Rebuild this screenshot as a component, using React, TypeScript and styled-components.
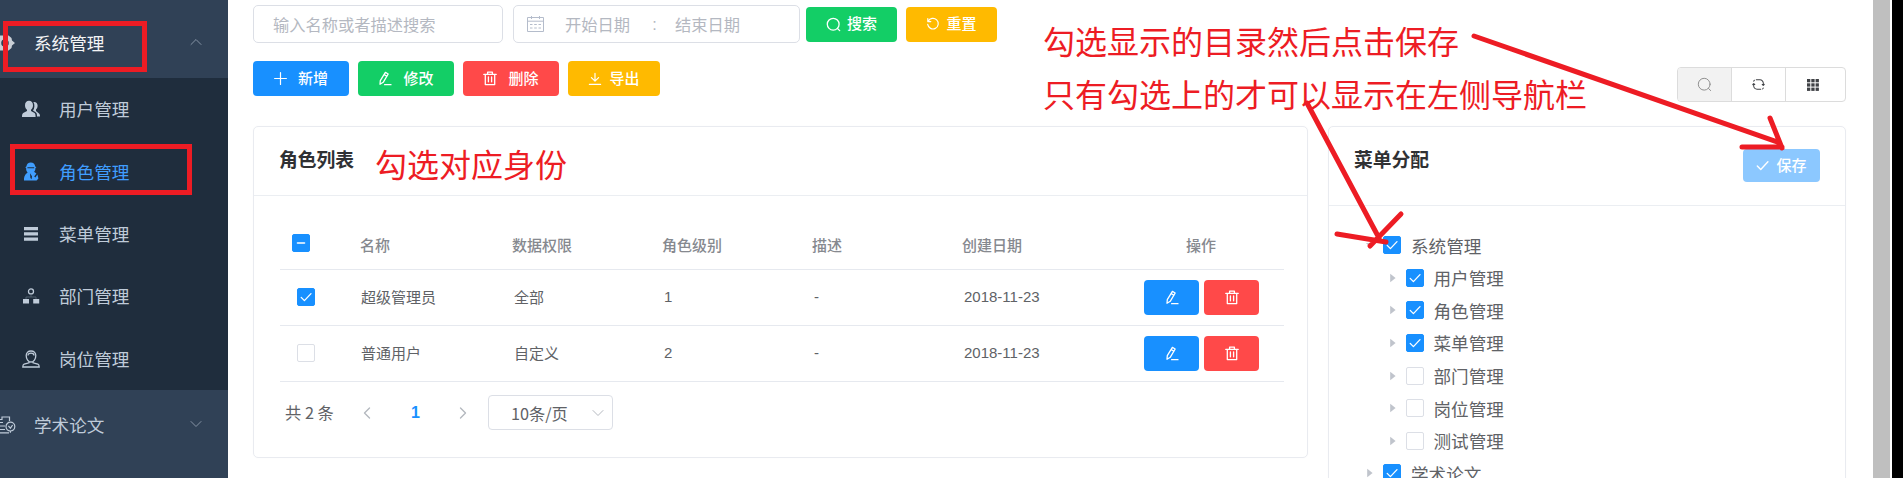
import React from "react";
import styled, { createGlobalStyle, css } from "styled-components";

const Global = createGlobalStyle`
  * { box-sizing: border-box; }
  html, body { margin: 0; padding: 0; overflow: hidden; background: #fff; }
  body { font-family: "Liberation Sans", "Noto Sans CJK SC", sans-serif; color: #606266; }
`;

const red = "#ed1c24";

const Page = styled.div`
  position: relative;
  display: flex;
  width: 1903px;
  height: 478px;
  overflow: hidden;
  background: #fff;
`;

const Sidebar = styled.nav`
  width: 228px;
  flex: none;
  background: #304156;
  padding-top: 8px;
  font-size: 17.6px;
  color: #bfcbd9;
`;

const MenuHead = styled.div<{ $active?: boolean }>`
  display: flex;
  align-items: center;
  height: 70px;
  padding-right: 26px;
  color: ${(p) => (p.$active ? "#f4f4f5" : "#bfcbd9")};
  > svg:first-child { margin-left: -3px; flex: none; }
  > svg:last-child { color: #8593a4; margin-top: -2px; }
  > span { margin: -2px 0 0 18px; flex: 1; }
`;

const SubMenu = styled.div`
  background: #1f2d3d;
  height: 312px;
`;

const SubItem = styled.div<{ $active?: boolean }>`
  display: flex;
  align-items: center;
  height: 62.4px;
  padding-left: 22px;
  gap: 19px;
  color: ${(p) => (p.$active ? "#409eff" : "#bfcbd9")};
  > span { margin-top: -1px; }
`;

const Main = styled.main`
  flex: 1;
  min-width: 0;
  display: flex;
  flex-direction: column;
  padding: 5px 27px 0 25px;
`;

const FilterRow = styled.div`
  display: flex;
  align-items: center;
  flex: none;
  height: 38px;
`;

const Field = styled.div<{ $w: number }>`
  display: flex;
  align-items: center;
  width: ${(p) => p.$w}px;
  height: 38px;
  border: 1px solid #dcdfe6;
  border-radius: 5px;
  font-size: 16.25px;
  color: #b4b8c1;
  margin-right: ${(p) => (p.$w === 250 ? 10 : 6)}px;
  white-space: nowrap;
`;

const Placeholder = styled.span`
  padding-left: 19px;
`;

const DateParts = styled.div`
  display: grid;
  grid-template-columns: 38px 65px 45px 66px;
  align-items: center;
  padding-left: 13px;
  > i { font-style: normal; text-align: center; padding-left: 4px; }
`;

const tones = {
  blue: "#1890ff",
  green: "#13ce66",
  red: "#ff4949",
  yellow: "#ffba00",
  pale: "#8cc8ff",
};

const Button = styled.button<{ $tone: keyof typeof tones; $w: number; $gap?: number; $h?: number }>`
  display: flex;
  align-items: center;
  justify-content: center;
  gap: ${(p) => p.$gap ?? 0}px;
  width: ${(p) => p.$w}px;
  height: ${(p) => p.$h ?? 35}px;
  padding: 0;
  border: 0;
  border-radius: 4px;
  background: ${(p) => tones[p.$tone]};
  color: #fff;
  font: 500 15px/20px "Noto Sans CJK SC", sans-serif;
  flex: none;
  > span { margin-top: -2px; }
`;

const ActionRow = styled.div`
  display: flex;
  flex: none;
  justify-content: space-between;
  align-items: flex-start;
  height: 65px;
  margin-top: 18px;
`;

const ButtonSet = styled.div<{ $gap: number }>`
  display: flex;
  gap: ${(p) => p.$gap}px;
`;

const ToolGroup = styled.div`
  display: flex;
  width: 169px;
  height: 35px;
  margin-top: 6px;
  border: 1px solid #dcdcdc;
  border-radius: 4px;
  overflow: hidden;
`;

const Tool = styled.div<{ $on?: boolean }>`
  display: flex;
  align-items: center;
  justify-content: center;
  width: 54px;
  border-right: 1px solid #dcdcdc;
  color: ${(p) => (p.$on ? "#909090" : "#404246")};
  background: ${(p) => (p.$on ? "#f2f2f2" : "#fff")};
  &:last-child { border: 0; }
`;

const Cards = styled.div`
  display: flex;
  gap: 20px;
  align-items: flex-start;
`;

const Card = styled.section<{ $w: number; $h: number }>`
  width: ${(p) => p.$w}px;
  height: ${(p) => p.$h}px;
  flex: none;
  border: 1px solid #e9ebf0;
  border-radius: 5px;
  box-shadow: 0 0 3px rgba(0, 0, 0, 0.02);
`;

const CardHead = styled.header<{ $h: number }>`
  display: flex;
  justify-content: space-between;
  align-items: flex-start;
  height: ${(p) => p.$h}px;
  padding: 22px 25px 0 25px;
  border-bottom: 1px solid #ebeef2;
`;

const Title = styled.h2`
  margin: 0;
  font-size: 18.8px;
  line-height: 24px;
  font-weight: 700;
  color: #303133;
`;

const Table = styled.div`
  margin: 26px 23px 0 26px;
`;

const TableRow = styled.div<{ $head?: boolean }>`
  display: grid;
  grid-template-columns: 81px 153px 150px 150px 150px 150px 1fr;
  align-items: center;
  height: ${(p) => (p.$head ? 48 : 56)}px;
  border-bottom: 1px solid #e6e9ef;
  font-size: 15px;
  color: #606266;
  > label { padding-left: 17px; margin-top: -2px; }
  > span { margin-top: -3px; }
  ${(p) =>
    p.$head &&
    css`
      grid-template-columns: 80px 152px 150px 150px 150px 150px 1fr;
      font-weight: 500;
      color: #86898f;
      > label { padding-left: 12px; margin-top: -5px; }
      > :last-child { padding-left: 74px; }
    `}
`;

const RowActions = styled.div`
  display: flex;
  gap: 5px;
  padding-left: 30px;
`;

const Box = styled.i<{ $on?: boolean }>`
  display: flex;
  align-items: center;
  justify-content: center;
  width: 18px;
  height: 18px;
  flex: none;
  border-radius: 2px;
  color: #fff;
  border: 1px solid ${(p) => (p.$on ? "#1890ff" : "#dcdfe6")};
  background: ${(p) => (p.$on ? "#1890ff" : "#fff")};
`;

const Pager = styled.div`
  display: flex;
  align-items: center;
  height: 35px;
  margin: 13px 0 0 31px;
  font: 16.25px/24px "Noto Sans CJK SC", sans-serif;
  color: #606266;
  > span:first-child { width: 76px; margin-top: -2px; }
  > svg { color: #b4b8bf; }
  > b { color: #1890ff; font: 700 16px "Liberation Sans", sans-serif; margin: 0 37px 0 38px; }
`;

const PageSize = styled.div`
  display: flex;
  align-items: center;
  justify-content: space-between;
  width: 125px;
  height: 35px;
  margin-left: 19px;
  padding: 0 8px 0 22px;
  border: 1px solid #dcdfe6;
  border-radius: 4px;
  > svg { color: #b4b8bf; }
`;

const Tree = styled.div`
  padding-top: 23px;
`;

const Node = styled.div<{ $level: number }>`
  display: flex;
  align-items: center;
  height: 32.57px;
  padding-left: ${(p) => 37 + p.$level * 22.5}px;
  font-size: 17.6px;
  color: #606266;
  > i { margin: 0 10px 0 9px; }
  > svg { flex: none; }
`;

const Gutter = styled.aside`
  width: 30px;
  flex: none;
  background: #000;
  border-left: 17px solid #bfbfbf;
  box-shadow: inset 2px 0 0 #fff;
`;

const Note = styled.div<{ $x: number; $y: number }>`
  position: absolute;
  left: ${(p) => p.$x}px;
  top: ${(p) => p.$y}px;
  font: 32px/40px "Noto Sans CJK SC", sans-serif;
  color: ${red};
  white-space: nowrap;
`;

const Frame = styled.div<{ $x: number; $y: number; $w: number }>`
  position: absolute;
  left: ${(p) => p.$x}px;
  top: ${(p) => p.$y}px;
  width: ${(p) => p.$w}px;
  height: 51px;
  border: 5px solid ${red};
`;

const Arrows = styled.svg`
  position: absolute;
  inset: 0;
  pointer-events: none;
`;

const stroke = { fill: "none", stroke: "currentColor", strokeLinecap: "round", strokeLinejoin: "round" } as const;

const Chevron = ({ d, s = 12, w = 1.2 }: { d: string; s?: number; w?: number }) => (
  <svg width={s} height={s} viewBox="0 0 12 12" {...stroke} strokeWidth={w}><path d={d} /></svg>
);
const Check = ({ s = 12, w = 1.3 }: { s?: number; w?: number }) => (
  <svg width={s} height={s} viewBox="0 0 12 12" {...stroke} strokeWidth={w}><path d="M1.2 6.4 4.4 9.6 11 2.6" /></svg>
);
const Pencil = () => (
  <svg width="14" height="15" viewBox="0 0 14 15" {...stroke} strokeWidth="1.3">
    <path d="M7.4 1.4 10.2 3 5.2 11.3 2 13.2 2.3 9.7ZM6.2 3.6 9 5.2M6.6 13.7H13" />
  </svg>
);
const Trash = () => (
  <svg width="14" height="15" viewBox="0 0 14 15" {...stroke} strokeWidth="1.3">
    <path d="M.8 3.4H13.2M4.6 3.2V1.2H9.4V3.2M2.3 3.6V13.6H11.7V3.6M5.4 6V10.8M8.6 6V10.8" />
  </svg>
);
const Plus = () => (
  <svg width="13" height="13" viewBox="0 0 13 13" {...stroke} strokeWidth="1.2"><path d="M6.5.6V12.4M.6 6.5H12.4" /></svg>
);
const Download = () => (
  <svg width="14" height="14" viewBox="0 0 14 14" {...stroke} strokeWidth="1.2"><path d="M7 1.4V9M3.4 5.6 7 9.2 10.6 5.6M1.4 12.4H12.6" /></svg>
);
const Search = ({ s = 15, w = 1.3 }: { s?: number; w?: number }) => (
  <svg width={s} height={s} viewBox="0 0 15 15" {...stroke} strokeWidth={w}><circle cx="7.2" cy="7.2" r="5.9" /><path d="M11.5 11.5 13.7 13.6" /></svg>
);
const Reset = () => (
  <svg width="14" height="14" viewBox="0 0 14 14" {...stroke} strokeWidth="1.2"><path d="M2.2 4.3A5.3 5.3 0 1 1 1.7 7.4M1.8 1.6V4.6H4.8" /></svg>
);
const Refresh = () => (
  <svg width="13" height="13" viewBox="0 0 14 14" {...stroke} strokeWidth="1.1">
    <path d="M4.6 2H8.6A3.6 3.6 0 0 1 12.2 5.6V7.6M9.4 12H5.4A3.6 3.6 0 0 1 1.8 8.4V6.2M1.8 6 .8 7.2M1.8 6 3 7M12.2 8 13.2 6.8M12.2 8 11 7M1.8 3.4 2.6 2.4M11.4 11.8 12.2 10.8" />
  </svg>
);
const Grid = () => (
  <svg width="12" height="12" viewBox="0 0 12 12" fill="currentColor">
    {[0, 4.3, 8.6].map((y) => [0, 4.3, 8.6].map((x) => <rect key={`${x}-${y}`} x={x} y={y} width="3.3" height="3.3" />))}
  </svg>
);
const Calendar = () => (
  <svg width="17" height="16" viewBox="0 0 17 16" fill="none" stroke="#b4bccb" strokeWidth="1">
    <path d="M.5 1.5H16.5V15.5H.5ZM.5 5.2H16.5M4.5 0V3M12.5 0V3M3 8.5H5.5M7.2 8.5H9.8M11.5 8.5H14M3 12H5.5M7.2 12H9.8M11.5 12H14" />
  </svg>
);
const Gear = () => (
  <svg width="19" height="20" viewBox="0 0 19 20">
    <path fill="#c9cfd6" fillRule="evenodd" d="M3 2.5H11.5L14.5 5 15 7.5 18 10 15 12.5 14.5 15 11.5 17.5H3ZM8 6.2A3.8 3.8 0 1 0 8 13.8 3.8 3.8 0 1 0 8 6.2Z" />
  </svg>
);
const Users = () => (
  <svg width="18" height="18" viewBox="0 0 18 18" fill="currentColor">
    <path d="M7 .8C9.4.8 11 2.6 11 5.2 11 7.2 10.2 8.9 9 9.8V11L12.6 13.1C13.4 13.7 13.6 15.4 13.6 17H0C0 15.4.2 13.7 1.2 13.1L5 11V9.8C3.8 8.9 3 7.2 3 5.2 3 2.6 4.6.8 7 .8Z" />
    <path d="M11.4 2C13.9 1.6 15.6 3.3 15.6 5.6 15.6 7.4 15 8.8 14 9.6V11L17 13.4C17.8 14.1 18 15 18 16.4H15C15 14.2 14.8 13 13.6 12.2L11 10.6C12.6 8.4 13 4.5 11.4 2Z" />
  </svg>
);
const Role = () => (
  <svg width="18" height="19" viewBox="0 0 18 19" fill="currentColor">
    <path fillRule="evenodd" d="M8.8.5C11.4.5 12.8 2 13.2 4.4L14.4 5.2 13.4 6C13.5 8 12.9 9 12 9.8L14.4 11.6 12.2 14.4 13.4 15.5 15.4 12.5 16.4 16.4 14.6 18.5H2C1.8 15.5 2.4 12.8 5.6 10.6 4.4 9.3 4 7.8 4.2 6L3.2 5.2 4.4 4.4C4.8 2 6.2.5 8.8.5ZM5.4 5.2V6.2H12.2V5.2ZM8 11.2 8.4 16 9.6 17.2 10 14.2Z" />
  </svg>
);
const Bars = () => (
  <svg width="18" height="16" viewBox="0 0 18 16" fill="currentColor"><path d="M2 1H16V4.2H2ZM2 6.3H16V9.5H2ZM2 11.6H16V14.8H2Z" /></svg>
);
const Org = () => (
  <svg width="18" height="16" viewBox="0 0 18 16">
    <path d="M9 6.5V9M4 11V9H14V11" fill="none" stroke="#5b6a79" strokeWidth=".8" />
    <circle cx="9" cy="3.4" r="2.5" fill="none" stroke="currentColor" strokeWidth="1.3" />
    <path fill="currentColor" d="M1 11H7V15.4H1ZM11.2 11H17.2V15.4H11.2Z" />
  </svg>
);
const Post = () => (
  <svg width="18" height="18" viewBox="0 0 18 18" fill="none" stroke="currentColor" strokeWidth="1.3">
    <path d="M4.2 5.5C4.2 2.5 6.2 1 9 1S13.8 2.5 13.8 5.5C13.8 9 11.8 12 9 12S4.2 9 4.2 5.5ZM6 5.6C6 3.8 7 3.2 9 3.2S12 3.8 12 5.6M6.8 11 7 12.8 2.2 14C1.2 14.5.8 15.5.8 17H17.2C17.2 15.5 16.8 14.5 15.8 14L11 12.8 11.2 11" />
  </svg>
);
const Thesis = () => (
  <svg width="19" height="18" viewBox="0 0 19 18" fill="none" stroke="currentColor" strokeWidth="1.2">
    <path d="M0 3.5H5V1H12.5V5M3 6.5H6M3 10H8M3 13.5H8M3 16.8H12" />
    <circle cx="13.4" cy="10.6" r="4.4" /><path d="M11.4 9.8 13.4 12.2 15.6 9M13.4 15V16.8" />
  </svg>
);
const Caret = ({ open }: { open?: boolean }) => (
  <svg width="8" height="10" viewBox="0 0 8 10" fill="#c0c4cc">
    <path d={open ? "M0 3H8L4 8Z" : "M1.2.8 6.6 5 1.2 9.2Z"} />
  </svg>
);

const submenu = [
  { label: "用户管理", icon: <Users /> },
  { label: "角色管理", icon: <Role />, active: true },
  { label: "菜单管理", icon: <Bars /> },
  { label: "部门管理", icon: <Org /> },
  { label: "岗位管理", icon: <Post /> },
];

const roles = [
  { name: "超级管理员", scope: "全部", level: 1, date: "2018-11-23", on: true },
  { name: "普通用户", scope: "自定义", level: 2, date: "2018-11-23", on: false },
];

const tree = [
  { label: "系统管理", level: 0, on: true, open: true },
  { label: "用户管理", level: 1, on: true },
  { label: "角色管理", level: 1, on: true },
  { label: "菜单管理", level: 1, on: true },
  { label: "部门管理", level: 1, on: false },
  { label: "岗位管理", level: 1, on: false },
  { label: "测试管理", level: 1, on: false },
  { label: "学术论文", level: 0, on: true },
];

export default function App() {
  return (
    <Page>
      <Global />
      <Sidebar>
        <MenuHead $active>
          <Gear /><span>系统管理</span><Chevron d="M1 8.5 6 3.5 11 8.5" w={1} />
        </MenuHead>
        <SubMenu>
          {submenu.map((m) => (
            <SubItem key={m.label} $active={m.active}>{m.icon}<span>{m.label}</span></SubItem>
          ))}
        </SubMenu>
        <MenuHead>
          <Thesis /><span>学术论文</span><Chevron d="M1 3.5 6 8.5 11 3.5" w={1} />
        </MenuHead>
      </Sidebar>

      <Main>
        <FilterRow>
          <Field $w={250}><Placeholder>输入名称或者描述搜索</Placeholder></Field>
          <Field $w={287}>
            <DateParts><Calendar /><span>开始日期</span><i>:</i><span>结束日期</span></DateParts>
          </Field>
          <ButtonSet $gap={9}>
            <Button $tone="green" $w={91} $gap={6}><Search /><span>搜索</span></Button>
            <Button $tone="yellow" $w={91} $gap={6}><Reset /><span>重置</span></Button>
          </ButtonSet>
        </FilterRow>

        <ActionRow>
          <ButtonSet $gap={9}>
            <Button $tone="blue" $w={96} $gap={11}><Plus /><span>新增</span></Button>
            <Button $tone="green" $w={96} $gap={11}><Pencil /><span>修改</span></Button>
            <Button $tone="red" $w={96} $gap={11}><Trash /><span>删除</span></Button>
            <Button $tone="yellow" $w={92} $gap={7}><Download /><span>导出</span></Button>
          </ButtonSet>
          <ToolGroup>
            <Tool $on><Search s={15} w={1} /></Tool>
            <Tool><Refresh /></Tool>
            <Tool><Grid /></Tool>
          </ToolGroup>
        </ActionRow>

        <Cards>
          <Card $w={1055} $h={332}>
            <CardHead $h={69}><Title>角色列表</Title></CardHead>
            <Table>
              <TableRow $head>
                <label><Box $on><Chevron d="M2.5 6H9.5" w={1.6} /></Box></label>
                <span>名称</span><span>数据权限</span><span>角色级别</span>
                <span>描述</span><span>创建日期</span><span>操作</span>
              </TableRow>
              {roles.map((r) => (
                <TableRow key={r.name}>
                  <label><Box $on={r.on}>{r.on && <Check />}</Box></label>
                  <span>{r.name}</span><span>{r.scope}</span><span>{r.level}</span>
                  <span>-</span><span>{r.date}</span>
                  <RowActions>
                    <Button $tone="blue" $w={55}><Pencil /></Button>
                    <Button $tone="red" $w={55}><Trash /></Button>
                  </RowActions>
                </TableRow>
              ))}
            </Table>
            <Pager>
              <span>共 2 条</span>
              <Chevron d="M8.5 1 3.5 6 8.5 11" w={1.4} />
              <b>1</b>
              <Chevron d="M3.5 1 8.5 6 3.5 11" w={1.4} />
              <PageSize><span>10条/页</span><Chevron d="M1 3.5 6 8.5 11 3.5" w={1} /></PageSize>
            </Pager>
          </Card>

          <Card $w={518} $h={400}>
            <CardHead $h={79}>
              <Title>菜单分配</Title>
              <Button $tone="pale" $w={77} $h={33} $gap={7}><Check s={13} /><span>保存</span></Button>
            </CardHead>
            <Tree>
              {tree.map((n) => (
                <Node key={n.label} $level={n.level}>
                  <Caret open={n.open} />
                  <Box $on={n.on}>{n.on && <Check />}</Box>
                  <span>{n.label}</span>
                </Node>
              ))}
            </Tree>
          </Card>
        </Cards>
      </Main>
      <Gutter />

      <Frame $x={3} $y={21} $w={144} />
      <Frame $x={10} $y={144} $w={182} />
      <Note $x={375} $y={143}>勾选对应身份</Note>
      <Note $x={1043} $y={20}>勾选显示的目录然后点击保存</Note>
      <Note $x={1043} $y={73}>只有勾选上的才可以显示在左侧导航栏</Note>
      <Arrows width="1903" height="478" viewBox="0 0 1903 478" fill="none" stroke={red} strokeWidth="5" strokeLinecap="round">
        <path d="M1474 36 1780 143M1770 118 1782 148M1742 147H1782" />
        <path d="M1307 103 1379 238M1337 234 1386 242M1401 214 1370 246" />
      </Arrows>
    </Page>
  );
}
